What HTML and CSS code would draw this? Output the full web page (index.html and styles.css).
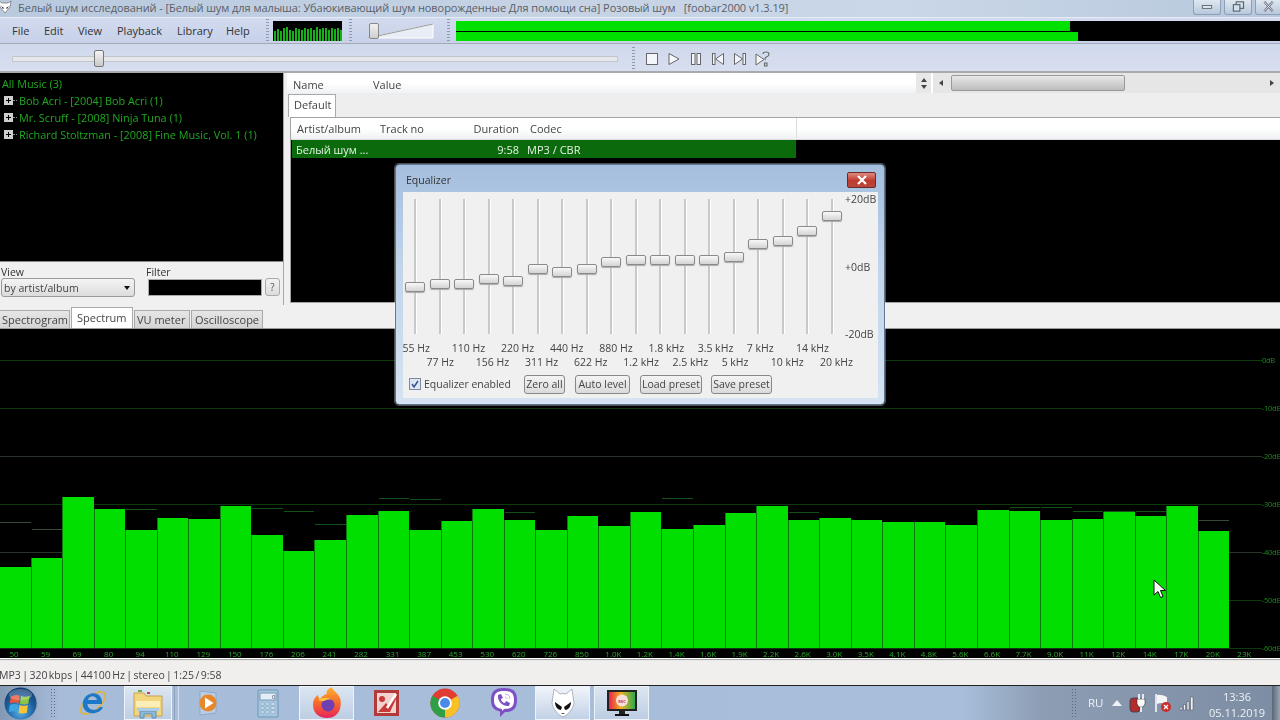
FILE: index.html
```html
<!DOCTYPE html>
<html lang="ru">
<head>
<meta charset="utf-8">
<title>foobar2000</title>
<link rel="stylesheet" href="styles.css">
</head>
<body>
<div class="app">
  <header class="titlebar">
    <svg class="title-icon" viewBox="0 0 14 14"><path d="M1 1l3 2h6l3-2-1 6-5 6-5-6z" fill="#fff" stroke="#555" stroke-width=".6"/><path d="M3 6l3 2-1 1zM11 6L8 8l1 1z" fill="#222"/></svg>
    <span class="title-text">Белый шум исследований - [Белый шум для малыша: Убаюкивающий шум новорожденные Для помощи сна] Розовый шум &nbsp; [foobar2000 v1.3.19]</span>
    <div class="win-btns">
      <span class="win-btn"><svg viewBox="0 0 28 14"><rect x="9" y="6" width="10" height="3" fill="#e8eef6" stroke="#566"/></svg></span>
      <span class="win-btn"><svg viewBox="0 0 28 14"><rect x="12" y="2" width="8" height="7" fill="none" stroke="#566" stroke-width="1.2"/><rect x="9" y="5" width="7" height="7" fill="#d5dfec" stroke="#566" stroke-width="1.2"/></svg></span>
      <span class="win-btn win-close"><svg viewBox="0 0 28 14"><path d="M9 2l9 10M18 2l-9 10" stroke="#667" stroke-width="2.4" fill="none"/><path d="M9 2l9 10M18 2l-9 10" stroke="#e8eef4" stroke-width="1" fill="none"/></svg></span>
    </div>
  </header>

  <div class="toolbar">
    <nav class="menu"><span>File</span><span>Edit</span><span>View</span><span>Playback</span><span>Library</span><span>Help</span></nav>
    <div class="grip grip-a"></div>
    <div class="mini-vis">
      <i style="height:10px"></i><i style="height:12px"></i><i style="height:10px"></i><i style="height:13px"></i><i style="height:14px"></i><i style="height:11px"></i><i style="height:10px"></i><i style="height:13px"></i><i style="height:12px"></i><i style="height:11px"></i><i style="height:13px"></i><i style="height:12px"></i><i style="height:13px"></i><i style="height:11px"></i><i style="height:14px"></i><i style="height:12px"></i><i style="height:13px"></i><i style="height:13px"></i><i style="height:11px"></i><i style="height:13px"></i><i style="height:12px"></i><i style="height:13px"></i><i style="height:11px"></i>
    </div>
    <div class="grip grip-b"></div>
    <div class="volume">
      <svg viewBox="0 0 68 18" width="68" height="18"><path d="M1 16H66V2z" fill="#e9edf6" stroke="#fff"/><path d="M1 16L66 2" stroke="#999" fill="none"/></svg>
      <span class="vol-thumb"></span>
    </div>
    <div class="grip grip-c"></div>
    <div class="meter">
      <div class="meter-line"><i style="width:614px"></i></div>
      <div class="meter-line"><i style="width:622px"></i></div>
    </div>
  </div>

  <div class="seekrow">
    <div class="seek"><span class="seek-thumb"></span></div>
    <div class="grip grip-d"></div>
    <div class="transport">
      <svg viewBox="0 0 14 14" width="14" height="14"><rect x="1.5" y="1.5" width="11" height="11" fill="#f4f6fb" stroke="#666"/></svg>
      <svg viewBox="0 0 14 14" width="14" height="14"><path d="M2 1.5v11l10-5.500z" fill="#f4f6fb" stroke="#666"/></svg>
      <svg viewBox="0 0 14 14" width="14" height="14"><rect x="2.500" y="1.500" width="3.500" height="11" fill="#f4f6fb" stroke="#666"/><rect x="8" y="1.500" width="3.500" height="11" fill="#f4f6fb" stroke="#666"/></svg>
      <svg viewBox="0 0 14 14" width="14" height="14"><rect x="1.500" y="1.500" width="2.500" height="11" fill="#f4f6fb" stroke="#666"/><path d="M12.500 1.500v11L4.500 7z" fill="#f4f6fb" stroke="#666"/></svg>
      <svg viewBox="0 0 14 14" width="14" height="14"><rect x="10" y="1.500" width="2.500" height="11" fill="#f4f6fb" stroke="#666"/><path d="M1.500 1.500v11L9.500 7z" fill="#f4f6fb" stroke="#666"/></svg>
      <svg viewBox="0 0 16 16" width="16" height="16"><path d="M1 3v11l8-5.500z" fill="#f4f6fb" stroke="#666"/><path d="M8 3q0-2 3-2t3 2-2.500 3-1 3M9.500 12h2.500v3H9.500z" fill="none" stroke="#666" stroke-width="1.100"/></svg>
    </div>
  </div>

  <main class="main">
    <aside class="library">
      <ul class="tree">
        <li class="tree-root">All Music (3)</li>
        <li><span class="exp"></span>Bob Acri - [2004] Bob Acri (1)</li>
        <li><span class="exp"></span>Mr. Scruff - [2008] Ninja Tuna (1)</li>
        <li><span class="exp"></span>Richard Stoltzman - [2008] Fine Music, Vol. 1 (1)</li>
      </ul>
      <div class="lib-controls">
        <div class="field-view">
          <label>View</label>
          <div class="combo"><span>by artist/album</span><b class="caret"></b></div>
        </div>
        <div class="field-filter">
          <label>Filter</label>
          <div class="filter-line"><div class="filter-input"></div><button class="qbtn">?</button></div>
        </div>
      </div>
    </aside>
    <section class="playlist">
      <div class="props-head">
        <div class="head-cell name">Name</div>
        <div class="head-cell value">Value</div>
        <div class="head-fill"></div>
        <div class="vspin"><b class="up"></b><b class="down"></b></div>
        <div class="hscroll"><b class="left"></b><div class="hthumb"></div><b class="right"></b></div>
      </div>
      <div class="pl-tabs"><span class="pl-tab">Default</span></div>
      <div class="pl-view">
        <div class="pl-head">
          <span class="col-artist">Artist/album</span><span class="col-track">Track no</span><span class="col-dur">Duration</span><span class="col-codec">Codec</span>
        </div>
        <div class="pl-row">
          <span class="col-artist">Белый шум ...</span><span class="col-track"></span><span class="col-dur">9:58</span><span class="col-codec">MP3 / CBR</span>
        </div>
      </div>
    </section>
  </main>

  <div class="vis-tabs">
    <span class="vtab">Spectrogram</span><span class="vtab active">Spectrum</span><span class="vtab">VU meter</span><span class="vtab">Oscilloscope</span>
  </div>

  <section class="spectrum">
    <div class="gridlines">
      <div class="gl"><span>0dB</span></div>
      <div class="gl"><span>-10dB</span></div>
      <div class="gl gray"><span>-20dB</span></div>
      <div class="gl"><span>-30dB</span></div>
      <div class="gl gray"><span>-40dB</span></div>
      <div class="gl"><span>-50dB</span></div>
      <div class="gl"><span>-60dB</span></div>
    </div>
    <div class="bars">
      <div class="bar" style="height:81px"><i class="peak gray" style="top:-45px"></i></div>
      <div class="bar" style="height:90px"><i class="peak gray" style="top:-29px"></i></div>
      <div class="bar" style="height:151px"></div>
      <div class="bar" style="height:139px"></div>
      <div class="bar" style="height:118px"><i class="peak" style="top:-21px"></i></div>
      <div class="bar" style="height:130px"></div>
      <div class="bar" style="height:129px"></div>
      <div class="bar" style="height:142px"></div>
      <div class="bar" style="height:113px"><i class="peak" style="top:-27px"></i></div>
      <div class="bar" style="height:97px"><i class="peak" style="top:-40px"></i></div>
      <div class="bar" style="height:108px"><i class="peak" style="top:-16px"></i></div>
      <div class="bar" style="height:133px"></div>
      <div class="bar" style="height:137px"><i class="peak" style="top:-13px"></i></div>
      <div class="bar" style="height:118px"><i class="peak" style="top:-31px"></i></div>
      <div class="bar" style="height:127px"></div>
      <div class="bar" style="height:139px"></div>
      <div class="bar" style="height:128px"><i class="peak" style="top:-8px"></i></div>
      <div class="bar" style="height:118px"></div>
      <div class="bar" style="height:132px"></div>
      <div class="bar" style="height:122px"></div>
      <div class="bar" style="height:136px"></div>
      <div class="bar" style="height:119px"><i class="peak" style="top:-31px"></i></div>
      <div class="bar" style="height:123px"></div>
      <div class="bar" style="height:135px"></div>
      <div class="bar" style="height:142px"></div>
      <div class="bar" style="height:128px"><i class="peak" style="top:-8px"></i></div>
      <div class="bar" style="height:130px"></div>
      <div class="bar" style="height:128px"></div>
      <div class="bar" style="height:126px"></div>
      <div class="bar" style="height:126px"></div>
      <div class="bar" style="height:123px"></div>
      <div class="bar" style="height:138px"></div>
      <div class="bar" style="height:137px"><i class="peak" style="top:-4px"></i></div>
      <div class="bar" style="height:128px"><i class="peak" style="top:-13px"></i></div>
      <div class="bar" style="height:129px"><i class="peak" style="top:-8px"></i></div>
      <div class="bar" style="height:136px"><i class="peak" style="top:-1px"></i></div>
      <div class="bar" style="height:132px"><i class="peak" style="top:-5px"></i></div>
      <div class="bar" style="height:142px"></div>
      <div class="bar" style="height:117px"><i class="peak gray" style="top:-11px"></i></div>
    </div>
    <div class="freqs"><span>50</span><span>59</span><span>69</span><span>80</span><span>94</span><span>110</span><span>129</span><span>150</span><span>176</span><span>206</span><span>241</span><span>282</span><span>331</span><span>387</span><span>453</span><span>530</span><span>620</span><span>726</span><span>850</span><span>1.0K</span><span>1.2K</span><span>1.4K</span><span>1.6K</span><span>1.9K</span><span>2.2K</span><span>2.6K</span><span>3.0K</span><span>3.5K</span><span>4.1K</span><span>4.8K</span><span>5.6K</span><span>6.6K</span><span>7.7K</span><span>9.0K</span><span>11K</span><span>12K</span><span>14K</span><span>17K</span><span>20K</span><span>23K</span></div>
  </section>

  <footer class="status">MP3 | 320 kbps | 44100 Hz | stereo | 1:25 / 9:58</footer>

  <div class="taskbar">
    <div class="start">
      <svg viewBox="0 0 36 36" width="35" height="35"><defs><radialGradient id="orb" cx=".5" cy=".75" r=".7"><stop offset="0" stop-color="#5ab0e8"/><stop offset=".6" stop-color="#1c5f9f"/><stop offset="1" stop-color="#123f70"/></radialGradient></defs><circle cx="18" cy="18" r="17" fill="url(#orb)" stroke="#8da4bd"/><path d="M8 11q5-3 9-1l-1 8q-4-2-9 0z" fill="#e8563a"/><path d="M18.500 10q4 2 9 0l-1.500 8q-4 2-8.500 0z" fill="#8cc63f"/><path d="M7 19.500q4-2 8.500 0L15 27q-5-2-9 0z" fill="#3ba6e0"/><path d="M17 19.500q4 2 8.500 0l-1 8q-4 1.500-8.500 0z" fill="#f7c533"/><ellipse cx="18" cy="9" rx="12" ry="6" fill="#fff" opacity=".22"/></svg>
    </div>
    <div class="grip-tb"></div>
    <div class="tb-item first">
      <svg viewBox="0 0 30 30" width="30" height="30"><ellipse cx="15" cy="15" rx="15" ry="7" transform="rotate(-40 15 15)" fill="none" stroke="#d9b44a" stroke-width="1.800"/><path d="M24 16H9.500c0 6 8 8 12.500 3h3c-3 8-18 9-20-1C3 9 13 3 19 6c4 2 5.500 6 5 10zM10 12h9c-1-5-8-5-9 0z" fill="#1c78c8" fill-rule="evenodd"/></svg>
    </div>
    <div class="tb-item lit narrow">
      <svg viewBox="0 0 32 32" width="32" height="32"><path d="M2 6h10l2 3h16v20H2z" fill="#f3d57e" stroke="#c9a24e"/><rect x="6" y="3" width="4" height="2" fill="#6bb050"/><rect x="15" y="5" width="3" height="2" fill="#d04040"/><path d="M4 14h24v6H4z" fill="#fbeeb8"/><path d="M8 24h16v7h-4v-4h-8v4H8z" fill="#8db9d9" stroke="#5f8fb5"/><rect x="5" y="21" width="22" height="3" fill="#a9cde6"/></svg>
    </div>
    <div class="tb-sep"></div>
    <div class="tb-item">
      <svg viewBox="0 0 30 30" width="30" height="30"><path d="M6 3l16 2v20l-16 2z" fill="#b8cde4" stroke="#8ea9c6"/><circle cx="14" cy="15" r="8.500" fill="#e8862a"/><path d="M11 9.500v11l8.500-5.500z" fill="#fff"/></svg>
    </div>
    <div class="tb-item">
      <svg viewBox="0 0 30 30" width="30" height="30"><rect x="5" y="2" width="20" height="27" rx="1" fill="#a6c6e0" stroke="#6f94b5"/><rect x="7" y="5" width="16" height="7" fill="#e4eef6" stroke="#7d9ab4"/><text class="calc-digit" x="19" y="11">0</text><path d="M8 15h3v2H8zM13 15h3v2h-3zM18 15h4v2h-4zM8 19h3v2H8zM13 19h3v2h-3zM18 19h4v2h-4zM8 23h3v2H8zM13 23h3v2h-3zM18 23h4v2h-4z" fill="#eef2f6" stroke="#6f94b5" stroke-width=".5"/></svg>
    </div>
    <div class="tb-item lit wide">
      <svg viewBox="0 0 32 32" width="32" height="32"><defs><linearGradient id="ff" x1="0" y1="0" x2="0" y2="1"><stop offset="0" stop-color="#ffb32b"/><stop offset=".55" stop-color="#f5642d"/><stop offset="1" stop-color="#e6245c"/></linearGradient></defs><path d="M16 31C7 31 2 25 2 18 2 13 4 10 7 8c0 2 1 3 2 4 2-3 5-5 7-5-1-2-1-4 5-7 0 3 6 6 8 11 2 6 1 20-13 20z" fill="url(#ff)"/><circle cx="17" cy="18" r="6.500" fill="#6e3fb0"/><path d="M7 13c4-3 11-3 14 0-3-1-6 0-8 1-2 0-4 0-6-1z" fill="#ffc23a"/></svg>
    </div>
    <div class="tb-item">
      <svg viewBox="0 0 30 30" width="30" height="30"><rect x="3" y="2" width="25" height="26" fill="#b23a3a"/><rect x="6" y="5" width="19" height="20" fill="#f1d2cd"/><circle cx="11" cy="11" r="3" fill="#c93a3a"/><path d="M7 24l8-9 3 3 6-10 1 3-6 13z" fill="#c93a3a"/><path d="M16 20L25 6" stroke="#fff" stroke-width="2.500"/></svg>
    </div>
    <div class="tb-item">
      <svg viewBox="0 0 30 30" width="30" height="30"><circle cx="15" cy="15" r="14.500" fill="#e03c31"/><path d="M15 15L27.600 7.700A14.500 14.500 0 0 1 15 29.500z" fill="#f6c026"/><path d="M15 15L15 29.500A14.500 14.500 0 0 1 2.400 7.700z" fill="#2f9e47"/><circle cx="15" cy="15" r="6.800" fill="#fff"/><circle cx="15" cy="15" r="5" fill="#4a8ae8"/></svg>
    </div>
    <div class="tb-item">
      <svg viewBox="0 0 30 32" width="30" height="32"><path d="M15 1c9 0 13 3 13 12s-4 12-12 12l-5 5v-5.500C4 23 2 19 2 13 2 4 6 1 15 1z" fill="#7d51c4"/><path d="M15 4c7 0 10 2 10 9s-3 9-10 9l-2 2v-2C7 21 5 18 5 13c0-7 3-9 10-9z" fill="#fff"/><path d="M9 8l3-1 2 4-2 1c0 2 2 4 4 4l1-2 4 2-1 3c-6 1-12-5-11-11z" fill="#7d51c4"/><path d="M16 7c3 0 5 2 5 5M16 10c1 0 2 1 2 2" stroke="#c4aee6" fill="none" stroke-width="1"/></svg>
    </div>
    <div class="tb-item lit wide bright">
      <svg viewBox="0 0 30 32" width="30" height="32"><path d="M6 2l6 5c2-.5 4-.5 6 0l6-5 2 14c-1 6-6 12-11 14C10 28 5 22 4 16z" fill="#fff" stroke="#889" stroke-width=".6"/><path d="M7 15l7 5-1 3c-3 0-6-3-6-8zM23 15l-7 5 1 3c3 0 6-3 6-8z" fill="#111"/><path d="M13 26h4l-2 1z" fill="#111"/></svg>
    </div>
    <div class="tb-item lit wide">
      <svg viewBox="0 0 32 30" width="32" height="30"><defs><linearGradient id="rec" x1="0" y1="0" x2="1" y2="0"><stop offset="0" stop-color="#e8224c"/><stop offset=".45" stop-color="#f0b41e"/><stop offset="1" stop-color="#2ea84f"/></linearGradient></defs><rect x="1" y="2" width="30" height="21" fill="#222"/><rect x="3" y="4" width="26" height="17" fill="url(#rec)"/><circle cx="16" cy="12.500" r="6" fill="#f7dfe0"/><text class="rec-label" x="16" y="14.500">REC</text><rect x="13" y="23" width="6" height="3" fill="#222"/><rect x="9" y="26" width="14" height="2" fill="#111"/></svg>
    </div>
    <div class="tb-spacer"></div>
    <div class="tray">
      <div class="grip-tb tray-grip"></div>
      <span class="lang">RU</span>
      <svg class="tray-arrow" viewBox="0 0 10 6" width="10" height="6"><path d="M0 6l5-6 5 6z" fill="#eef2f6"/></svg>
      <svg class="tray-icon" viewBox="0 0 18 20" width="18" height="20"><rect x="1" y="5" width="10" height="14" rx="3" fill="#b52a2a" stroke="#445"/><path d="M8 6h8v5l-2 3h-4l-2-3z" fill="#fff" stroke="#333" stroke-width=".6"/><path d="M10 1v5M14 1v5M12 14v5" stroke="#fff" stroke-width="1.600"/></svg>
      <svg class="tray-icon" viewBox="0 0 18 20" width="18" height="20"><path d="M2 1v18" stroke="#fff" stroke-width="1.500"/><path d="M3 2q4-1 10 2v7q-5-2-10 0z" fill="#f2f4f6"/><circle cx="12" cy="14" r="5" fill="#cf2b2b"/><path d="M10 12l4 4M14 12l-4 4" stroke="#fff" stroke-width="1.300"/></svg>
      <svg class="tray-icon" viewBox="0 0 16 16" width="16" height="16"><path d="M1 12h2v3H1zM4.500 9.500h2V15h-2zM8 6.500h2V15H8zM11.500 2h2.500v13h-2.500z" fill="#eef2f6" stroke="#445" stroke-width=".5"/></svg>
      <div class="clock"><span>13:36</span><span>05.11.2019</span></div>
      <div class="show-desktop"></div>
    </div>
  </div>

  <div class="cursor"><svg viewBox="0 0 13 19" width="13" height="19"><path d="M1 1v15l4-3.500 2.500 6 2.500-1-2.500-6H12.500z" fill="#fff" stroke="#111"/></svg></div>

  <div class="eq-dialog">
    <div class="eq-title"><span>Equalizer</span><span class="eq-close"><svg viewBox="0 0 12 10" width="12" height="10"><path d="M2 1l8 8M10 1L2 9" stroke="#fff" stroke-width="2.200"/></svg></span></div>
    <div class="eq-client">
      <div class="eq-sliders">
        <div class="band"><i style="top:83px"></i></div>
        <div class="band"><i style="top:80px"></i></div>
        <div class="band"><i style="top:80px"></i></div>
        <div class="band"><i style="top:75px"></i></div>
        <div class="band"><i style="top:77px"></i></div>
        <div class="band"><i style="top:65px"></i></div>
        <div class="band"><i style="top:68px"></i></div>
        <div class="band"><i style="top:65px"></i></div>
        <div class="band"><i style="top:58px"></i></div>
        <div class="band"><i style="top:56px"></i></div>
        <div class="band"><i style="top:56px"></i></div>
        <div class="band"><i style="top:56px"></i></div>
        <div class="band"><i style="top:56px"></i></div>
        <div class="band"><i style="top:53px"></i></div>
        <div class="band"><i style="top:40px"></i></div>
        <div class="band"><i style="top:37px"></i></div>
        <div class="band"><i style="top:27px"></i></div>
        <div class="band"><i style="top:12px"></i></div>
        <div class="eq-scale"><span>+20dB</span><span>+0dB</span><span>-20dB</span></div>
      </div>
      <div class="eq-labels">
        <div class="eq-row"><span>55 Hz</span><span>110 Hz</span><span>220 Hz</span><span>440 Hz</span><span>880 Hz</span><span>1.8 kHz</span><span>3.5 kHz</span><span>7 kHz</span><span>14 kHz</span></div>
        <div class="eq-row second"><span>77 Hz</span><span>156 Hz</span><span>311 Hz</span><span>622 Hz</span><span>1.2 kHz</span><span>2.5 kHz</span><span>5 kHz</span><span>10 kHz</span><span>20 kHz</span></div>
      </div>
      <div class="eq-actions">
        <span class="check"><svg viewBox="0 0 12 12" width="12" height="12"><rect x=".5" y=".5" width="11" height="11" fill="#dde6f4" stroke="#7d8a9c"/><path d="M3 6l2 3 4-6" stroke="#3a4f8a" stroke-width="1.500" fill="none"/></svg>Equalizer enabled</span>
        <button class="eq-btn b1">Zero all</button>
        <button class="eq-btn b2">Auto level</button>
        <button class="eq-btn b3">Load preset</button>
        <button class="eq-btn b4">Save preset</button>
      </div>
    </div>
  </div>
</div>
</body>
</html>
```

FILE: styles.css
```css
* { box-sizing: border-box; }
html, body { margin: 0; padding: 0; background: #000; }
.app {
  position: relative;
  width: 1280px;
  height: 720px;
  overflow: hidden;
  display: flex;
  flex-direction: column;
  font-family: "Open Sans", "Noto Sans", sans-serif;
  font-size: 11px;
  color: #444;
  filter: blur(0.4px);
}
svg { display: block; flex: none; }

.titlebar {
  height: 18px;
  display: flex;
  align-items: flex-start;
  background: linear-gradient(90deg, #b9c9de 0%, #c4d2e4 40%, #cad7e8 70%, #b7c8dc 100%);
  border-bottom: 1px solid #e6ebf4;
}
.title-icon { width: 14px; height: 14px; margin: 0 0 0 -2px; }
.title-text { margin-left: 6px; line-height: 16px; font-size: 11px; letter-spacing: -0.07px; color: #5a5f68; white-space: nowrap; }
.win-btns { margin-left: auto; display: flex; gap: 3px; margin-right: -3px; }
.win-btn { width: 28px; height: 15px; border: 1px solid #8ea0b8; border-top: 0; border-radius: 0 0 3px 3px; background: linear-gradient(#dfe7f1, #b8c8dc); }

.toolbar {
  height: 26px;
  display: flex;
  align-items: center;
  background: linear-gradient(#d2daee, #c7d1e8);
  border-bottom: 1px solid #a5abb6;
  position: relative;
}
.menu { display: flex; width: 264px; padding-left: 12px; font-size: 11px; color: #333; }
.menu span:nth-child(1) { width: 32px; }
.menu span:nth-child(2) { width: 34px; }
.menu span:nth-child(3) { width: 39px; }
.menu span:nth-child(4) { width: 60px; }
.menu span:nth-child(5) { width: 49px; }
.grip { width: 3px; height: 24px; background: repeating-linear-gradient(#8f9ab0 0 1px, transparent 1px 3px); flex: none; }
.grip-a { margin-left: 2px; }
.mini-vis {
  margin-left: 4px;
  width: 69px;
  height: 20px;
  background: #000;
  display: flex;
  align-items: flex-end;
  gap: 1px;
  padding-left: 1px;
}
.mini-vis i { display: block; width: 2px; background: #18b018; }
.grip-b { margin-left: 7px; }
.volume { margin-left: 15px; position: relative; width: 68px; height: 18px; }
.vol-thumb { position: absolute; left: 2px; top: 1px; width: 10px; height: 16px; border: 1px solid #888; border-radius: 2px; background: linear-gradient(#f2f2f2, #cfcfcf); }
.grip-c { margin-left: 12px; }
.meter { margin-left: 6px; flex: 1; height: 20px; background: #000; display: flex; flex-direction: column; gap: 1px; margin-top: 1px; }
.meter-line { flex: 1; }
.meter-line i { display: block; height: 100%; background: #00e000; }

.seekrow {
  height: 29px;
  display: flex;
  align-items: center;
  padding-top: 2px;
  background: linear-gradient(#d0d8ec, #d7deef);
  border-bottom: 2px solid #a8aab0;
}
.seek { margin-left: 12px; width: 606px; height: 6px; background: #e6e7ea; border: 1px solid #c4c6ca; position: relative; }
.seek-thumb { position: absolute; left: 81px; top: -7px; width: 10px; height: 17px; border: 1px solid #777; border-radius: 2px; background: linear-gradient(#f4f4f4, #c9c9c9); }
.grip-d { margin-left: 14px; }
.transport { display: flex; align-items: center; gap: 8px; margin-left: 10px; }

.main { height: 232px; display: flex; background: #f0f0f0; }
.library { width: 284px; display: flex; flex-direction: column; border-right: 1px solid #a6a6a6; }
.tree {
  list-style: none;
  margin: 0;
  padding: 2px 0 0 2px;
  height: 189px;
  background: #000;
  border-bottom: 1px solid #888;
  color: #20a820;
  font-size: 10.850px;
}
.tree li { height: 17px; line-height: 17px; display: flex; align-items: center; white-space: nowrap; }
.exp {
  position: relative;
  width: 9px;
  height: 9px;
  margin: 0 6px 0 2px;
  background: linear-gradient(#000, #000) center / 5px 1px no-repeat, linear-gradient(#000, #000) center / 1px 5px no-repeat, #cfcfcf;
  flex: none;
}
.exp::after { content: ""; position: absolute; left: 9px; top: 4px; width: 4px; border-top: 1px dotted #8a8a8a; }
.lib-controls { flex: 1; display: flex; padding: 4px 0 0 1px; font-size: 10.500px; }
.field-view { width: 145px; }
.field-view label, .field-filter label { display: block; height: 13px; line-height: 13px; color: #333; }
.combo {
  width: 134px;
  height: 19px;
  margin-top: -1px;
  padding: 0 4px 0 2px;
  display: flex;
  align-items: center;
  justify-content: space-between;
  border: 1px solid #9a9a9a;
  border-radius: 3px;
  background: linear-gradient(#f4f4f4, #dcdcdc);
}
.caret { width: 0; height: 0; border: 3px solid transparent; border-top: 4px solid #111; border-bottom: 0; }
.filter-line { display: flex; align-items: center; gap: 3px; margin: -2px 0 0 2px; }
.filter-input { width: 114px; height: 17px; margin-top: 2px; background: #000; border: 1px solid #aaa; }
.qbtn { width: 15px; height: 18px; padding: 0; margin-top: 1px; font: 10px "Open Sans", sans-serif; color: #555; border: 1px solid #aaa; border-radius: 3px; background: linear-gradient(#f2f2f2, #ddd); }

.playlist { flex: 1; margin-left: 3px; display: flex; flex-direction: column; min-width: 0; }
.props-head {
  height: 20px;
  display: flex;
  align-items: center;
  background: linear-gradient(#fff 50%, #f0f2f5);
  font-size: 11px;
  color: #444;
}
.head-cell { padding: 2px 0 0 6px; }
.head-cell.name { width: 80px; }
.head-cell.value { padding-left: 6px; }
.head-fill { flex: 1; }
.vspin { width: 17px; height: 20px; display: flex; flex-direction: column; justify-content: space-around; align-items: center; border-right: 2px solid #fff; background: #e8e8e8; padding: 3px 0; }
.up, .down, .left, .right { display: block; width: 0; height: 0; border: 3px solid transparent; }
.up { border-bottom: 4px solid #444; border-top: 0; }
.down { border-top: 4px solid #444; border-bottom: 0; }
.hscroll { width: 347px; height: 20px; display: flex; align-items: center; background: #e6e6e6; padding-left: 6px; }
.left { border-right: 4px solid #444; border-left: 0; }
.right { border-left: 4px solid #444; border-right: 0; margin-left: auto; margin-right: 6px; }
.hthumb { width: 174px; height: 16px; margin-left: 8px; border: 1px solid #999; border-radius: 2px; background: linear-gradient(#e8e8e8, #bdbdbd); }
.pl-tabs { height: 24px; display: flex; align-items: flex-end; background: #eee; padding-left: 1px; }
.pl-tab { width: 48px; height: 23px; line-height: 20px; padding-left: 5px; background: #fff; border: 1px solid #aaa; border-bottom: 0; }
.pl-view { flex: 1; margin: 0 0 2px 3px; background: #000; border: 1px solid #a4a4a4; border-right: 0; }
.pl-head, .pl-row { display: flex; height: 18px; align-items: center; width: 504px; }
.pl-head { height: 22px; width: auto; background: linear-gradient(#fff 50%, #eff1f4); color: #444; border-bottom: 1px solid #ddd; padding-bottom: 1px; }
.pl-row { margin: 0 0 0 1px; background: #0b6a0b; color: #e6f2e6; }
.col-artist { width: 89px; padding-left: 4px; white-space: nowrap; }
.pl-head .col-artist { padding-left: 6px; }
.col-track { width: 87px; }
.col-dur { width: 55px; text-align: right; padding-right: 3px; }
.col-codec { margin-left: 5px; width: 270px; }
.pl-head .col-codec { border-right: 1px solid #ddd; height: 100%; line-height: 21px; margin-right: 0; width: 267px; margin-left: 8px; }
.pl-head .col-artist, .pl-head .col-track, .pl-head .col-dur { line-height: 21px; }

.vis-tabs { height: 24px; display: flex; align-items: flex-end; background: #f0f0f0; border-bottom: 1px solid #9c9c9c; padding-left: 0; font-size: 11px; }
.vtab { height: 18px; line-height: 17px; padding: 0 2px; margin-right: 1px; background: linear-gradient(#e6e6e6, #d4d4d4); border: 1px solid #aaa; border-bottom: 0; color: #444; white-space: nowrap; }
.vtab.active { height: 21px; line-height: 19px; background: #fff; padding: 0 5px; }
.vtab:nth-child(1) { width: 70px; border-left: 0; }
.vtab:nth-child(2) { width: 62px; }
.vtab:nth-child(3) { width: 56px; }
.vtab:nth-child(4) { width: 72px; padding-left: 3px; }

.spectrum { position: relative; height: 329px; background: #000; display: flex; flex-direction: column; border-bottom: 0; }
.gridlines { position: absolute; left: 0; right: 0; top: 31px; }
.gl { position: relative; height: 48px; border-top: 1px solid #0d3a0d; margin-right: 18px; }
.gl.gray { border-top-color: #2a332a; }
.gl span { position: absolute; left: 100%; top: -6px; color: #1d8a1d; font-size: 7.500px; letter-spacing: -0.3px; line-height: 10px; white-space: nowrap; }
.bars { position: relative; height: 319px; flex: none; display: flex; align-items: flex-end; margin-left: -1px; }
.bar { position: relative; flex: 0 0 31.560px; background: #00df00; border-left: 1px solid #0b7a0b; }
.peak { position: absolute; left: 0; right: 0; height: 1px; background: #12521a; }
.peak.gray { background: #3a4a3a; }
.freqs { position: relative; height: 10px; display: flex; margin-left: -1.780px; color: #2aa82a; font-size: 8px; line-height: 11px; }
.freqs span { flex: 0 0 31.560px; text-align: center; }

.status {
  height: 27px;
  padding: 5px 0 0 0;
  line-height: 24px;
  background: linear-gradient(#fff 0 1px, #a8a8a8 1px 2px, #e8e8e8 2px 3px, #f1eeee 3px);
  color: #444;
  font-size: 10.500px;
  word-spacing: -1.300px;
  white-space: nowrap;
  text-indent: -1px;
}

.taskbar {
  flex: 1;
  display: flex;
  align-items: center;
  border-top: 1px solid #222;
  background: linear-gradient(90deg, #8499b3 0, #a6bcd9 60px, #a8bfdc 960px, #8d9eb4 1040px, #7d8da3 1270px);
}
.start { width: 50px; height: 34px; display: flex; align-items: center; justify-content: center; padding-right: 10px; }
.grip-tb { width: 6px; height: 30px; flex: none; background: radial-gradient(circle, #5d6b7e 0.8px, transparent 1px) 0 0 / 3px 3px; }
.tb-item { width: 59px; height: 34px; display: flex; align-items: center; justify-content: center; }
.tb-item.first { margin-left: 7px; }
.tb-item.lit { background: linear-gradient(#dce6f2, #bccde3); box-shadow: inset 0 0 0 1px #eef3f9; }
.tb-item.bright { background: linear-gradient(#f3f6fb, #bfd0e6); }
.tb-item.narrow { width: 48px; margin: 0 0 0 2px; }
.tb-item.wide { width: 55px; margin: 0 2px; }
.tb-sep { width: 5px; height: 34px; border-left: 1px solid #8fa3bd; border-right: 1px solid #d5dfec; margin-left: 2px; }
.tb-spacer { flex: 1; }
.tray { display: flex; align-items: center; height: 34px; color: #eef2f6; }
.tray-grip { margin-right: 11px; }
.lang { font-size: 11.500px; width: 24px; margin-top: -2px; }
.tray-arrow { margin-right: 7px; }
.tray-icon { margin-right: 7px; }
.clock { width: 70px; display: flex; flex-direction: column; align-items: center; font-size: 11px; line-height: 16px; padding-top: 3px; }
.show-desktop { width: 8px; height: 34px; background: linear-gradient(90deg, #5a6676, #9aa5b4); }
.calc-digit { font: 6px "Open Sans", sans-serif; fill: #345; }
.rec-label { font: 700 4px "Open Sans", sans-serif; fill: #c33; text-anchor: middle; }

.cursor { position: absolute; left: 1153px; top: 579px; }

.eq-dialog {
  position: absolute;
  left: 395px;
  top: 164px;
  width: 490px;
  height: 241px;
  padding: 0 6px 7px 7px;
  display: flex;
  flex-direction: column;
  background: linear-gradient(#a4bedd, #c2d5eb 45%, #d5e3f2);
  border: 1px solid #5f7790;
  border-radius: 4px;
  box-shadow: 0 0 0 1px rgba(255,255,255,.3);
}
.eq-title { height: 27px; flex: none; display: flex; align-items: center; justify-content: space-between; color: #333; font-size: 10.500px; padding: 2px 1px 0 3px; }
.eq-close { width: 29px; height: 16px; display: flex; align-items: center; justify-content: center; background: linear-gradient(#e08a80, #c03a2e 55%, #b8473c); border: 1px solid #6a2a28; border-radius: 2px; margin-right: 1px; }
.eq-client { flex: 1; background: #f0f0f0; display: flex; flex-direction: column; color: #444; font-size: 10.500px; }
.eq-sliders { height: 142px; padding: 7px 0 0 1px; display: flex; position: relative; }
.band { width: 24.500px; height: 135px; position: relative; flex: none; }
.band::before { content: ""; position: absolute; left: 10px; top: 0; bottom: 0; width: 2px; background: #c8c8c8; border-right: 1px solid #fff; }
.band i { position: absolute; left: 1px; width: 20px; height: 10px; border: 1px solid #8a8a8a; border-radius: 2px; background: linear-gradient(#f8f8f8, #d4d4d4); box-shadow: 0 1px 1px #aaa; }
.eq-scale { position: absolute; right: 0; top: 0; height: 149px; display: flex; flex-direction: column; justify-content: space-between; width: 33px; line-height: 14px; color: #444; }
.eq-labels { height: 28px; line-height: 14px; margin: 7px 0 0 -0.500px; }
.eq-row { display: flex; height: 14px; white-space: nowrap; }
.eq-row span { flex: 0 0 49.200px; }
.eq-row.second { padding-left: 24px; }
.eq-actions { display: flex; align-items: center; height: 28px; padding-left: 6px; margin-top: 1px; }
.check { display: flex; align-items: center; gap: 3px; width: 115px; white-space: nowrap; letter-spacing: -0.02px; }
.eq-btn { height: 19px; padding: 0; font: 10.500px "Open Sans", sans-serif; color: #444; border: 1px solid #888; border-radius: 3px; background: linear-gradient(#f4f4f4, #dadada); white-space: nowrap; }
.b1 { width: 41px; }
.b2 { width: 55px; margin-left: 10px; }
.b3 { width: 62px; margin-left: 10px; }
.b4 { width: 61px; margin-left: 9px; }
```
